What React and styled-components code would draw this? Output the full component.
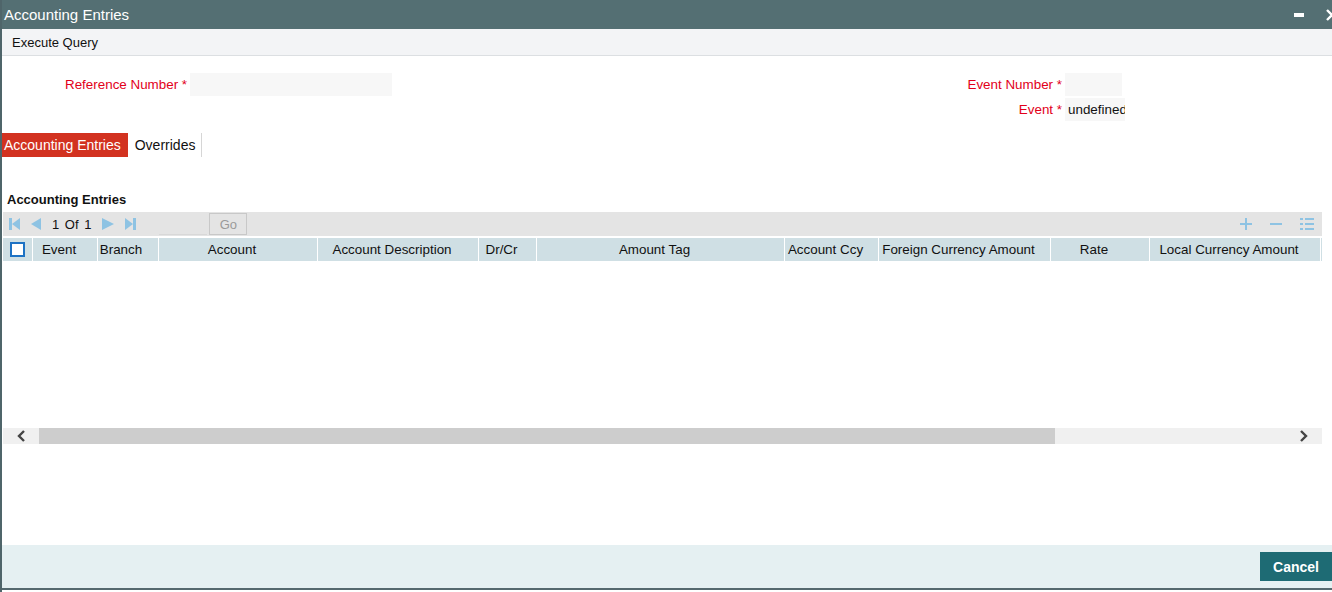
import React from "react";
import styled, { createGlobalStyle } from "styled-components";

const Global = createGlobalStyle`
  html, body { margin: 0; padding: 0; background: #fff; }
  body { font-family: "Liberation Sans", Arial, sans-serif; }
`;

const Window = styled.div`
  width: 1332px;
  height: 592px;
  overflow: hidden;
  display: flex;
  flex-direction: column;
  box-sizing: border-box;
  border-left: 2px solid #4f656a;
  background: #fff;
  font-size: 13px;
  color: #111;
`;

const TitleBar = styled.div`
  height: 29px;
  flex: none;
  background: #546f73;
  margin-left: -2px;
  display: flex;
  align-items: center;
  justify-content: space-between;
  padding-left: 4px;
  color: #fff;
  font-size: 15px;
`;

const WinControls = styled.div`
  display: flex;
  align-items: center;
  gap: 22px;
  margin-right: -6px;
`;

const Toolbar = styled.div`
  height: 26px;
  flex: none;
  background: #f3f4f6;
  border-bottom: 1px solid #dcdfe2;
  display: flex;
  align-items: center;
  padding-left: 10px;
  font-size: 13px;
`;

const Form = styled.div`
  display: flex;
  justify-content: space-between;
  padding: 17px 207px 0 63px;
`;

const FieldGrid = styled.div`
  display: grid;
  grid-template-columns: auto auto;
  row-gap: 2px;
  column-gap: 3px;
  align-items: center;
  align-self: flex-start;
`;

const Label = styled.label`
  color: #e2001a;
  font-size: 13.4px;
  text-align: right;
  white-space: nowrap;
`;

const Input = styled.div`
  width: ${(p) => p.w}px;
  height: 23px;
  background: #f7f7f7;
  font-size: 13.4px;
  line-height: 23px;
  padding-left: 3px;
  box-sizing: border-box;
  overflow: hidden;
  white-space: nowrap;
`;

const Tabs = styled.div`
  display: flex;
  margin-top: 12px;
  height: 24px;
`;

const Tab = styled.div`
  padding: 0 ${(p) => (p.active ? 7 : 6)}px 0 ${(p) => (p.active ? 2 : 7)}px;
  display: flex;
  align-items: center;
  font-size: 14px;
  background: ${(p) => (p.active ? "#d23220" : "transparent")};
  color: ${(p) => (p.active ? "#fff" : "#111")};
  border-right: ${(p) => (p.active ? "none" : "1px solid #d6d6d6")};
`;

const SectionTitle = styled.div`
  font-weight: bold;
  font-size: 13px;
  margin: 35px 0 0 5px;
  height: 20px;
  line-height: 16px;
`;

const GridWrap = styled.div`
  margin: 0 10px 0 1px;
  display: flex;
  flex-direction: column;
`;

const GridBar = styled.div`
  height: 24px;
  background: #e4e4e4;
  display: flex;
  align-items: center;
  justify-content: space-between;
  padding: 0 8px 0 6px;
`;

const Pager = styled.div`
  display: flex;
  align-items: center;
  gap: 11px;
  font-size: 13px;
  word-spacing: 2px;
`;

const PageInput = styled.div`
  width: 48px;
  height: 20px;
  margin-left: 12px;
  border-bottom: 1px solid #d8d8d8;
`;

const GoButton = styled.div`
  width: 36px;
  height: 20px;
  border: 1px solid #c8c8c8;
  color: #9a9a9a;
  font-size: 13px;
  display: flex;
  align-items: center;
  justify-content: center;
  margin-left: -9px;
`;

const BarIcons = styled.div`
  display: flex;
  align-items: center;
  gap: 17px;
`;

const HeaderRow = styled.div`
  margin-top: 2px;
  height: 23px;
  display: flex;
  background: #cfdfe4;
`;

const HeadCell = styled.div`
  width: ${(p) => p.w}px;
  flex: none;
  box-sizing: border-box;
  border-right: 1px solid #fff;
  display: flex;
  align-items: center;
  justify-content: center;
  padding-right: ${(p) => (p.pad ?? 12)}px;
  font-size: 13.4px;
  white-space: nowrap;
`;

const CheckBox = styled.div`
  width: 15px;
  height: 15px;
  box-sizing: border-box;
  border: 2px solid #1d72c4;
  background: #fff;
`;

const GridBody = styled.div`
  height: 167px;
`;

const HScroll = styled.div`
  height: 16px;
  background: #f0f0f0;
  display: flex;
  align-items: center;
`;

const Arrow = styled.div`
  width: 36px;
  display: flex;
  justify-content: center;
  flex: none;
`;

const Thumb = styled.div`
  height: 16px;
  width: 1016px;
  background: #cdcdcd;
  flex: none;
`;

const Spacer = styled.div`
  flex: 1;
`;

const Footer = styled.div`
  height: 45px;
  flex: none;
  background: #e5f0f2;
  display: flex;
  justify-content: flex-end;
  align-items: flex-start;
  padding-top: 7px;
  box-sizing: border-box;
  border-bottom: 2px solid #55696f;
  margin-bottom: 2px;
`;

const CancelButton = styled.button`
  width: 72px;
  height: 29px;
  background: #1e6b74;
  color: #fff;
  border: none;
  font-family: inherit;
  font-weight: bold;
  font-size: 14px;
  padding: 0;
  cursor: pointer;
`;

const columns = [
  { name: "Event", w: 65, pad: 12 },
  { name: "Branch", w: 61, pad: 14 },
  { name: "Account", w: 159 },
  { name: "Account Description", w: 161 },
  { name: "Dr/Cr", w: 58 },
  { name: "Amount Tag", w: 248 },
  { name: "Account Ccy", w: 94 },
  { name: "Foreign Currency Amount", w: 172 },
  { name: "Rate", w: 99 },
  { name: "Local Currency Amount", w: 171 },
];

const blue = "#8ec3e3";

const FirstIcon = () => (
  <svg width="11" height="12" viewBox="0 0 11 12">
    <rect x="0" y="0" width="3" height="12" fill={blue} />
    <polygon points="11,0 11,12 3,6" fill={blue} />
  </svg>
);
const PrevIcon = () => (
  <svg width="10" height="12" viewBox="0 0 10 12">
    <polygon points="10,0 10,12 0,6" fill={blue} />
  </svg>
);
const NextIcon = () => (
  <svg width="12" height="12" viewBox="0 0 12 12">
    <polygon points="0,0 0,12 12,6" fill={blue} />
  </svg>
);
const LastIcon = () => (
  <svg width="11" height="12" viewBox="0 0 11 12">
    <polygon points="0,0 0,12 8,6" fill={blue} />
    <rect x="8" y="0" width="3" height="12" fill={blue} />
  </svg>
);

export default function App() {
  return (
    <>
      <Global />
      <Window>
        <TitleBar>
          <span>Accounting Entries</span>
          <WinControls>
            <svg width="10" height="4" viewBox="0 0 10 4">
              <rect width="10" height="4" fill="#fff" />
            </svg>
            <svg width="12" height="12" viewBox="0 0 12 12">
              <path d="M1 1 L11 11 M11 1 L1 11" stroke="#fff" strokeWidth="2.4" />
            </svg>
          </WinControls>
        </TitleBar>
        <Toolbar>Execute Query</Toolbar>

        <Form>
          <FieldGrid>
            <Label>Reference Number *</Label>
            <Input w={202} />
          </FieldGrid>
          <FieldGrid>
            <Label>Event Number *</Label>
            <Input w={57} />
            <Label>Event *</Label>
            <Input w={60}>undefined</Input>
          </FieldGrid>
        </Form>

        <Tabs>
          <Tab active>Accounting Entries</Tab>
          <Tab>Overrides</Tab>
        </Tabs>

        <SectionTitle>Accounting Entries</SectionTitle>

        <GridWrap>
          <GridBar>
            <Pager>
              <FirstIcon />
              <PrevIcon />
              <span>1 Of 1</span>
              <NextIcon />
              <LastIcon />
              <PageInput />
              <GoButton>Go</GoButton>
            </Pager>
            <BarIcons>
              <svg width="12" height="12" viewBox="0 0 12 12">
                <path d="M6 0 V12 M0 6 H12" stroke={blue} strokeWidth="2" />
              </svg>
              <svg width="14" height="12" viewBox="0 0 14 12">
                <path d="M1 6 H13" stroke={blue} strokeWidth="2" />
              </svg>
              <svg width="14" height="12" viewBox="0 0 14 12">
                <g fill={blue}>
                  <rect x="0" y="0" width="3" height="2" />
                  <rect x="5" y="0" width="9" height="2" />
                  <rect x="0" y="5" width="3" height="2" />
                  <rect x="5" y="5" width="9" height="2" />
                  <rect x="0" y="10" width="3" height="2" />
                  <rect x="5" y="10" width="9" height="2" />
                </g>
              </svg>
            </BarIcons>
          </GridBar>
          <HeaderRow>
            <HeadCell w={30} pad={0}>
              <CheckBox />
            </HeadCell>
            {columns.map((c) => (
              <HeadCell key={c.name} w={c.w} pad={c.pad}>
                {c.name}
              </HeadCell>
            ))}
          </HeaderRow>
          <GridBody />
          <HScroll>
            <Arrow>
              <svg width="10" height="12" viewBox="0 0 10 12">
                <path d="M8 1 L3 6 L8 11" stroke="#444" strokeWidth="2.4" fill="none" />
              </svg>
            </Arrow>
            <Thumb />
            <Spacer />
            <Arrow>
              <svg width="10" height="12" viewBox="0 0 10 12">
                <path d="M2 1 L7 6 L2 11" stroke="#444" strokeWidth="2.4" fill="none" />
              </svg>
            </Arrow>
          </HScroll>
        </GridWrap>

        <Spacer />
        <Footer>
          <CancelButton>Cancel</CancelButton>
        </Footer>
      </Window>
    </>
  );
}
